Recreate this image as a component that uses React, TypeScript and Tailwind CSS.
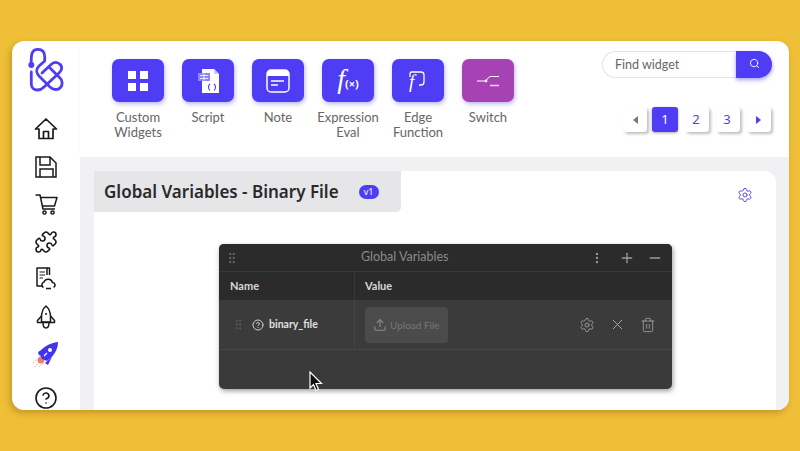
import React from "react";
import { Puzzle, Search, HelpCircle, Settings, X, Trash2, Plus, Minus, EllipsisVertical, GripVertical, Upload } from "lucide-react";

const Logo = () => (
  <svg width="38" height="46" viewBox="0 0 38 46" fill="none" stroke="#4f3df5" strokeWidth="2.800" strokeLinecap="round" strokeLinejoin="round">
    <circle cx="4.300" cy="18" r="3" fill="#4f3df5" stroke="none" />
    <path d="M4.300 18C4 9 4 2.300 11 2.300C17 2.300 17.700 7 17.700 10V14L12 19C9 22 9 26 12 29L23 40C26 43 31 43.500 33.500 40.500C36 37.500 35.500 33 33 31L22 20" />
    <path d="M4.300 25V37C4.300 41 7 43 10.500 43C13 43 15 42 17 40L32 26C35.500 23 35.500 19 32.500 17C29.500 14.500 26 15.500 23.500 18L15 26" />
  </svg>
);

const HomeIcon = () => (
  <svg width="24" height="24" viewBox="0 0 24 24" fill="none" stroke="#1a1a1a" strokeWidth="1.700" strokeLinejoin="round">
    <path d="M1.500 12L12 2L22.500 12H19V21.500H5V12Z" />
    <path d="M9.500 21.500V14.500H14.500V21.500" />
  </svg>
);

const SaveIcon = () => (
  <svg width="24" height="24" viewBox="0 0 24 24" fill="none" stroke="#1a1a1a" strokeWidth="1.500" strokeLinejoin="miter">
    <path d="M2 2H16L22 8V22H2Z" />
    <path d="M6 2V10H16V2" />
    <path d="M6 22V14H19V22" />
  </svg>
);

const CartIcon = () => (
  <svg width="24" height="24" viewBox="0 0 24 24" fill="none" stroke="#1a1a1a" strokeWidth="1.500" strokeLinejoin="round">
    <path d="M1.500 3H6L9 17H21" />
    <path d="M6.500 5.500H23L20.500 14H8.500" />
    <circle cx="10.500" cy="20.500" r="1.600" />
    <circle cx="18.500" cy="20.500" r="1.600" />
  </svg>
);

const Scripted = () => (
  <svg width="21" height="24" viewBox="0 0 21 24">
    <path d="M4 0H16L21 5V24H4Z" fill="#fff" />
    <path d="M16 0V5H21Z" fill="#c9c5ff" />
    <rect x="0" y="4" width="12" height="8" fill="#8f86f5" />
    <path d="M2 6.500h8M2 9.500h8M6 4.500v7" stroke="#fff" strokeWidth="0.800" />
    <path d="M12 15c-2 1.500-2 5 0 6.500M16 15c2 1.500 2 5 0 6.500" stroke="#4f3df5" strokeWidth="1.100" fill="none" />
  </svg>
);

const NoteIcon = () => (
  <svg width="24" height="24" viewBox="0 0 24 24" fill="none">
    <rect x="1" y="1" width="22" height="22" rx="4" stroke="#fff" strokeWidth="1.500" />
    <path d="M1 5a4 4 0 0 1 4-4h14a4 4 0 0 1 4 4v2H1Z" fill="#fff" />
    <path d="M5 12h13M5 16h7" stroke="#fff" strokeWidth="1.500" />
  </svg>
);

const EdgeIcon = () => (
  <div className="relative w-[16px] h-[20px] -ml-[2px]">
    <svg width="16" height="15" viewBox="0 0 16 15" fill="none" className="block">
      <path d="M1 6V3a2 2 0 0 1 2-2h9a3 3 0 0 1 3 3v7a3 3 0 0 1-3 3h-2" stroke="#fff" strokeWidth="1.300" />
    </svg>
    <span className="absolute left-[0px] top-[1px] text-white italic text-[19px] leading-[20px] [font-family:'Liberation_Serif',serif]">f</span>
  </div>
);

const SwitchIcon = () => (
  <svg width="22" height="12" viewBox="0 0 22 12" fill="none" stroke="#fff" strokeWidth="1">
    <path d="M0 6H8L13 1.500H22" />
    <path d="M13 10.500H22" stroke="#f3d4f7" strokeWidth="1.500" />
    <circle cx="9" cy="6" r="1" fill="#fff" />
  </svg>
);

const Rocket = () => (
  <svg width="26" height="26" viewBox="0 0 26 26">
    <path d="M2 25L7 19M0 21L4 17M6 25L10 21" stroke="#f9a8a0" strokeWidth="1" strokeDasharray="1.500 1" />
    <circle cx="8" cy="18" r="3.500" fill="#f47c6c" />
    <path d="M6 11C9 6 16 1 25 0C25 8 20 15 14 19L9 17Z" fill="#4433ee" />
    <path d="M5 10L10 7L6 14ZM12 21L19 15L15 23Z" fill="#4433ee" />
    <circle cx="17" cy="8" r="2" fill="#fff" />
    <path d="M11 14L14 11" stroke="#fff" strokeWidth="1.200" />
  </svg>
);

const BookIcon = () => (
  <svg width="22" height="24" viewBox="0 0 22 24" fill="none" stroke="#1a1a1a" strokeWidth="1.500" strokeLinejoin="round">
    <path d="M8 19H2V1H12V8" />
    <path d="M12 1H14.500V8" />
    <path d="M4.500 5H10M4.500 8H10M4.500 11H8" strokeWidth="1" />
    <path d="M8.500 20.500a3 3 0 0 1 .5-5.500a4.500 4.500 0 0 1 8.500 0.500a2.500 2.500 0 0 1 1 4.800" />
    <path d="M11 21.500H16" />
  </svg>
);

const Bootstrap = () => (
  <svg width="22" height="24" viewBox="0 0 22 24" fill="none" stroke="#1a1a1a" strokeWidth="1.500" strokeLinejoin="round">
    <path d="M11 1C7.500 4 6.500 8 6.500 12V17H15.500V12C15.500 8 14.500 4 11 1Z" />
    <path d="M6.500 11L2.500 15.500V17.500H19.500V15.500L15.500 11" />
    <path d="M8 17.500C8 21 9.500 23 11 23C12.500 23 14 21 14 17.500" />
    <circle cx="11" cy="9" r="1" fill="#1a1a1a" stroke="none" />
  </svg>
);

const Pg = ({ children, active, muted }: { children: React.ReactNode; active?: boolean; muted?: boolean }) => (
  <div
    className={
      "h-[25px] rounded-[3px] flex items-center justify-center text-[13px] " +
      (active
        ? "w-[26px] -ml-[2px] bg-[#4f3df5] text-white shadow-[0_1px_3px_rgba(0,0,0,.35)]"
        : muted
        ? "w-[24px] bg-white text-[#777] shadow-[2px_2px_3px_rgba(0,0,0,.25)]"
        : "w-[24px] pr-[2px] bg-white text-[#4f3df5] shadow-[2px_2px_3px_rgba(0,0,0,.25)]")
    }
  >
    {children}
  </div>
);

const Tool = ({ label, children, purple }: { label: React.ReactNode; children: React.ReactNode; purple?: boolean }) => (
  <div className="w-[70px] flex flex-col items-center">
    <div
      className={
        "w-[52px] h-[43px] rounded-[7px] flex items-center justify-center shadow-[1px_2px_4px_rgba(60,50,200,.35)] " +
        (purple ? "bg-[#a742b5]" : "bg-[#4f3df5]")
      }
    >
      {children}
    </div>
    <div className="mt-[8px] text-[13px] leading-[15px] text-[#666] text-center [font-family:'Lato',sans-serif]">{label}</div>
  </div>
);

export default function App() {
  return (
    <div className="w-[800px] h-[451px] bg-[#efbf37] pt-[41px] pl-[12px] overflow-hidden relative [font-family:'Noto_Sans','Open_Sans',sans-serif]">
      <div className="w-[777px] h-[369px] rounded-[12px] bg-white flex overflow-hidden shadow-[-2px_3px_6px_rgba(120,80,0,.35)]">
        {/* Sidebar */}
        <aside className="w-[68px] shrink-0 flex flex-col items-center text-[#1a1a1a]">
          <div className="mt-[6px] mr-[1px] h-[46px] flex items-start">
            <Logo />
          </div>
          <div className="mt-[24px] flex flex-col items-center gap-[13.500px]">
            <HomeIcon />
            <SaveIcon />
            <CartIcon />
            <Puzzle size={24} strokeWidth={1.6} />
            <BookIcon />
            <Bootstrap />
            <Rocket />
          </div>
          <div className="mt-[18px]">
            <HelpCircle size={24} strokeWidth={1.6} />
          </div>
        </aside>

        {/* Main */}
        <main className="flex-1 min-w-0 flex flex-col">
          <header className="h-[116px] shrink-0 flex pl-[23px] pr-[17px] pt-[10px] shadow-[0_1px_2px_rgba(0,0,0,.04)]">
            <div className="flex pt-[8px]">
              <Tool label={<>Custom<br />Widgets</>}>
                <div className="grid grid-cols-2 gap-[4px]">
                  <div className="w-[8px] h-[8px] bg-white" />
                  <div className="w-[8px] h-[8px] bg-white" />
                  <div className="w-[8px] h-[8px] bg-white" />
                  <div className="w-[8px] h-[8px] bg-white" />
                </div>
              </Tool>
              <Tool label="Script"><Scripted /></Tool>
              <Tool label="Note"><NoteIcon /></Tool>
              <Tool label={<>Expression<br />Eval</>}>
                <div className="flex items-end text-white italic leading-none -mt-[3px]">
                  <span className="text-[28px] [font-family:'Liberation_Serif',serif]">f</span>
                  <span className="text-[11px] font-bold not-italic mb-[4px]">(×)</span>
                </div>
              </Tool>
              <Tool label={<>Edge<br />Function</>}><EdgeIcon /></Tool>
              <Tool purple label="Switch"><SwitchIcon /></Tool>
            </div>
            <div className="ml-auto flex flex-col items-end">
              <div className="flex h-[27px] w-[170px]">
                <div className="w-[134px] rounded-l-full border border-[#e3e3e8] border-r-0 pl-[12px] pt-[2px] flex items-center text-[12.500px] text-[#666] [font-family:'Lato',sans-serif]">
                  Find widget
                </div>
                <div className="w-[36px] rounded-r-full bg-[#4f3df5] flex items-center justify-center shadow-[0_2px_4px_rgba(79,61,245,.5)]">
                  <Search size={11} color="#fff" strokeWidth={2} className="-mt-[2px]" />
                </div>
              </div>
              <div className="mt-[29px] flex gap-[7px] mr-[1px]">
                <Pg muted><span className="w-0 h-0 border-y-[4px] border-y-transparent border-r-[5px] border-r-[#777]" /></Pg>
                <Pg active>1</Pg>
                <Pg>2</Pg>
                <Pg>3</Pg>
                <Pg><span className="w-0 h-0 border-y-[4px] border-y-transparent border-l-[5px] border-l-[#4f3df5]" /></Pg>
              </div>
            </div>
          </header>

          <section className="flex-1 min-h-0 bg-[#f1f1f4] pt-[14px] pl-[14px] pr-[13px]">
            <div className="h-full bg-white rounded-tr-[12px] flex flex-col">
              <div className="flex items-start">
                <div className="w-[307px] h-[41px] bg-[#e6e6e9] rounded-br-[5px] flex items-center pl-[10px]">
                  <span className="text-[17px] font-semibold text-[#2a2a2a] [font-family:'Noto_Sans',sans-serif]">Global Variables - Binary File</span>
                  <span className="ml-[20px] w-[20px] h-[14px] rounded-full bg-[#4f3df5] text-white text-[9px] leading-[14px] text-center">v1</span>
                </div>
                <Settings size={16} strokeWidth={1.5} color="#5a4bdc" className="ml-auto mr-[23px] mt-[16px]" />
              </div>
              <div className="ml-[125px] mt-[32px] w-[453px] h-[145px] rounded-[5px] bg-[#3a3a3a] shadow-[1px_2px_5px_rgba(0,0,0,.4)] overflow-hidden flex flex-col text-[#e5e5e5] [font-family:'Lato',sans-serif]">
                <div className="h-[28px] bg-[#2b2b2b] border-b border-[#383838] flex items-center pl-[6px] pr-[9px]">
                  <GripVertical size={14} color="#666" />
                  <span className="ml-[122px] text-[12.500px] text-[#8a8a8a]">Global Variables</span>
                  <div className="ml-auto flex items-center text-[#9a9a9a]">
                    <EllipsisVertical size={14} />
                    <Plus size={16} className="ml-[15px]" />
                    <Minus size={16} className="ml-[12px]" />
                  </div>
                </div>
                <div className="h-[28px] bg-[#2b2b2b] flex items-center text-[11px] font-bold text-[#d8d8d8]">
                  <div className="w-[136px] h-full pl-[11px] flex items-center border-r border-[#383838]">Name</div>
                  <div className="pl-[10px]">Value</div>
                </div>
                <div className="h-[50px] bg-[#3b3b3b] border-b border-[#464646] flex items-center">
                  <div className="w-[136px] h-full flex items-center border-r border-[#444] pl-[13px]">
                    <GripVertical size={13} color="#5a5a5a" />
                    <HelpCircle size={12} color="#d0d0d0" className="ml-[7px]" />
                    <span className="ml-[5px] text-[10.500px] font-bold text-[#e0e0e0]">binary_file</span>
                  </div>
                  <div className="ml-[10px] w-[83px] h-[36px] rounded-[4px] bg-[#4b4b4b] flex items-center pl-[8px] text-[#777]">
                    <Upload size={14} color="#888" />
                    <span className="ml-[3px] mt-[1px] text-[10px]">Upload File</span>
                  </div>
                  <div className="ml-auto mr-[16px] flex items-center gap-[14px]">
                    <Settings size={16} strokeWidth={1.4} color="#9a9a9a" />
                    <X size={17} strokeWidth={1.4} color="#a5a5a5" />
                    <Trash2 size={16} strokeWidth={1.4} color="#9a9a9a" />
                  </div>
                </div>
              </div>
            </div>
          </section>
        </main>
      </div>
      <svg width="14" height="21" viewBox="0 0 14 21" className="absolute left-[309px] top-[371px]">
        <path d="M1 1V17L4.500 13.500L7 19.500L9.500 18.500L7 12.500H12.500Z" fill="#111" stroke="#fff" strokeWidth="1.200" />
      </svg>
    </div>
  );
}
